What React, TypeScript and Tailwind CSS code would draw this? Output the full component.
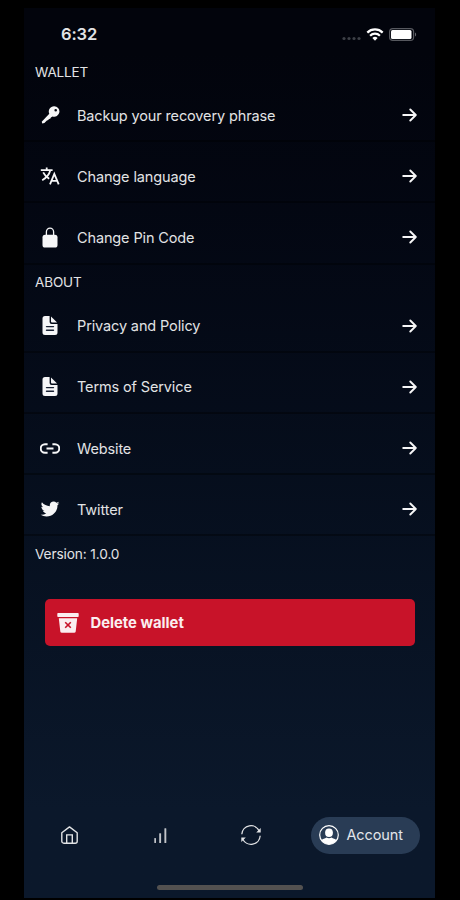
import type { ReactNode } from "react";
import { IoLogoTwitter } from "react-icons/io5";

type Item = { label: string; icon: ReactNode };

const walletItems: Item[] = [
  { label: "Backup your recovery phrase", icon: <KeyIcon /> },
  { label: "Change language", icon: <TranslateIcon /> },
  { label: "Change Pin Code", icon: <LockIcon /> },
];

const aboutItems: Item[] = [
  { label: "Privacy and Policy", icon: <DocumentIcon /> },
  { label: "Terms of Service", icon: <DocumentIcon /> },
  { label: "Website", icon: <LinkIcon /> },
  { label: "Twitter", icon: <IoLogoTwitter className="size-5" /> },
];

function KeyIcon() {
  return (
    <svg className="h-[18px] w-[19px]" viewBox="0 0 19 18" fill="none">
      <path
        d="M13 .3a5.2 5.2 0 1 1-1.500 10.100L9.900 11.400l-.7 1.300-1.300.2-.6 1.200-1.400.3-2.500 2.500-2.100.5-.6-1.700L8.300 7.800A5.200 5.200 0 0 1 13 .3Zm1.700 2.700a1.300 1.300 0 1 0 0 2.600 1.300 1.300 0 0 0 0-2.600Z"
        fill="currentColor"
        fillRule="evenodd"
      />
    </svg>
  );
}

function TranslateIcon() {
  return (
    <svg className="h-[18px] w-5" viewBox="0 0 20 18" fill="none" stroke="currentColor" strokeWidth="1.8">
      <path d="M.8 3.200h11.800M6.700.6v2.600M10.300 3.200C9.400 7 6.400 10.800 2.200 13.200M3.200 5.400c1.500 3 3.500 5 6 6.400" />
      <path d="m10 17.300 4.300-10.500 4.400 10.500M11.600 13.800h5.400" />
    </svg>
  );
}

function LockIcon() {
  return (
    <svg className="h-[21px] w-4" viewBox="0 0 16 21" fill="none">
      <path d="M4.400 8.500V4.700a3.600 3.600 0 0 1 7.200 0v3.800" stroke="currentColor" strokeWidth="1.300" />
      <rect x="0.500" y="7.700" width="15" height="12.800" rx="2.600" fill="currentColor" />
    </svg>
  );
}

function DocumentIcon() {
  return (
    <svg className="h-[19px] w-4" viewBox="0 0 16 19" fill="none">
      <path
        d="M3 0h4.600v5.900a2 2 0 0 0 2 2h5.900v8.500a2.500 2.500 0 0 1-2.500 2.500H3A2.500 2.500 0 0 1 .5 16.400V2.500A2.500 2.500 0 0 1 3 0Z"
        fill="currentColor"
      />
      <path d="M9 .4 15.100 6.500H10a1 1 0 0 1-1-1Z" fill="currentColor" />
      <path d="M4.500 10.600h7M4.500 14.300h7" stroke="#182032" strokeWidth="1.400" strokeLinecap="round" />
    </svg>
  );
}

function LinkIcon() {
  return (
    <svg className="h-[11px] w-5" viewBox="0 0 20 11" fill="none" stroke="currentColor" strokeWidth="2">
      <path d="M7.600 1.200H5a4.300 4.300 0 0 0 0 8.600h2.600M12.400 1.200H15a4.300 4.300 0 0 1 0 8.600h-2.600M6.500 5.500h7" />
    </svg>
  );
}

function ArrowIcon() {
  return (
    <svg className="h-[14px] w-[15px]" viewBox="0 0 15 14" fill="none" stroke="currentColor" strokeWidth="1.900">
      <path d="M1.200 7h12.300M8.300 1.500 13.800 7l-5.500 5.500" strokeLinejoin="round" strokeLinecap="round" />
    </svg>
  );
}

function TrashIcon() {
  return (
    <svg className="h-5 w-[22px]" viewBox="0 0 22 20" fill="none">
      <rect x="0.300" y="0" width="21.400" height="4" rx="0.800" fill="currentColor" />
      <path d="M1.800 5.200h18.400l-1.500 13.200a1.600 1.600 0 0 1-1.600 1.400H4.900a1.600 1.600 0 0 1-1.600-1.400Z" fill="currentColor" />
      <path d="m8.200 9.200 5.600 5.600M13.800 9.200l-5.600 5.600" stroke="#c81329" strokeWidth="1.600" />
    </svg>
  );
}

function HomeIcon() {
  return (
    <svg className="h-[18px] w-[17px]" viewBox="0 0 17 18" fill="none" stroke="currentColor" strokeWidth="1.400">
      <path d="M.8 6.700 8.500.9l7.700 5.800v8.500a2 2 0 0 1-2 2H2.800a2 2 0 0 1-2-2Z" strokeLinejoin="round" />
      <path d="M5.700 17V8.900h5.600V17" />
    </svg>
  );
}

function BarsIcon() {
  return (
    <svg className="h-[15px] w-[13px]" viewBox="0 0 13 15" fill="currentColor" opacity="0.850">
      <rect x="0.300" y="10" width="1.700" height="5" rx=".5" />
      <rect x="5.200" y="5.200" width="1.900" height="9.800" rx=".5" />
      <rect x="10.400" y="0.300" width="1.900" height="14.700" rx=".5" />
    </svg>
  );
}

function SyncIcon() {
  return (
    <svg className="size-5" viewBox="0 0 20 20" fill="none" stroke="currentColor" strokeWidth="1.300">
      <path d="M.8 9.200A9.200 9.200 0 0 1 18.300 6M19.200 10.800A9.200 9.200 0 0 1 1.700 14" />
      <path d="M19.700 3v4.400h-4.500ZM.3 17v-4.400h4.500Z" fill="currentColor" stroke="none" />
    </svg>
  );
}

function AccountIcon() {
  return (
    <svg className="size-5" viewBox="0 0 20 20" fill="none">
      <circle cx="10" cy="10" r="9.300" stroke="currentColor" strokeWidth="1.200" />
      <ellipse cx="10" cy="7.700" rx="3.900" ry="4.300" fill="currentColor" />
      <path d="M2.600 15.300c1-1.700 3.300-1.900 4.900-2.900 1.500 1.100 3.500 1.100 5 0 1.600 1 3.900 1.200 4.900 2.900A9.300 9.300 0 0 1 10 19.300a9.300 9.300 0 0 1-7.400-4Z" fill="currentColor" />
    </svg>
  );
}

function StatusBar() {
  return (
    <div className="flex h-[52px] items-center justify-between pr-[18.5px] pl-[37px]">
      <span className="text-[16.5px] leading-5 font-semibold">6:32</span>
      <div className="flex items-center text-white">
        <svg className="mt-1 h-3 w-[19px]" viewBox="0 0 19 12" fill="#3d4047">
          <circle cx="2" cy="8.500" r="1.600" />
          <circle cx="7" cy="8.500" r="1.600" />
          <circle cx="12" cy="8.500" r="1.600" />
          <circle cx="17" cy="8.500" r="1.600" />
        </svg>
        <svg className="ml-[5px] h-[13px] w-[18px]" viewBox="0 0 18 13" fill="none" stroke="currentColor" strokeWidth="2.200">
          <path d="M1.300 4.600a11 11 0 0 1 15.400 0M4.100 7.700a7 7 0 0 1 9.800 0" />
          <path d="m9 12.700-2.600-2.600a3.700 3.700 0 0 1 5.200 0Z" fill="currentColor" stroke="none" />
        </svg>
        <svg className="ml-[5px] h-[13px] w-7" viewBox="0 0 28 13" fill="none">
          <rect x="0.600" y="0.600" width="24" height="11.800" rx="3.200" stroke="#56585e" strokeWidth="1.200" />
          <rect x="2" y="2" width="20.500" height="9" rx="1.500" fill="currentColor" />
          <path d="M26 4.500c1.500.6 1.500 3.400 0 4Z" fill="#66686e" />
        </svg>
      </div>
    </div>
  );
}

function SettingsRow({ label, icon }: Item) {
  return (
    <div className="flex h-[61.2px] items-center border-b-2 border-black/35 pt-[9px] pr-[18px] pl-[14px] text-[#f6f6f7]">
      <span className="flex w-6 justify-center">{icon}</span>
      <span className="ml-[15px] flex-1 pt-px text-[#e2e3e5]">{label}</span>
      <ArrowIcon />
    </div>
  );
}

export default function App() {
  return (
    <div className="h-[900px] w-[460px] overflow-hidden bg-black pt-2 pl-6 font-[Inter,sans-serif] text-[14.5px] tracking-[-0.13px] text-[#e2e3e5]">
      <div className="flex h-[890px] w-[411px] flex-col bg-linear-to-b from-[#02040c] from-5% to-[#0b182b] to-90%">
        <StatusBar />
        <h2 className="h-[21px] pl-[11px] text-[13.5px] leading-6">WALLET</h2>
        {walletItems.map((item) => (
          <SettingsRow key={item.label} {...item} />
        ))}
        <h2 className="h-[27px] pl-[11px] text-[13.5px] leading-[35px]">ABOUT</h2>
        {aboutItems.map((item) => (
          <SettingsRow key={item.label} {...item} />
        ))}
        <p className="h-9 pl-[11px] text-[13.7px] leading-[37px]">Version: 1.0.0</p>

        <button className="mr-5 ml-[21px] mt-[27px] flex h-[47px] items-center rounded-[5px] bg-[#c81329] pl-[11.5px] text-[14.8px] font-bold tracking-normal text-[#fbeef0]">
          <TrashIcon />
          <span className="ml-3">Delete wallet</span>
        </button>

        <nav className="mt-auto mb-[24.5px] flex h-[51px] items-center pr-[15px] pl-[37px]">
          <HomeIcon />
          <span className="ml-[76px]">
            <BarsIcon />
          </span>
          <span className="ml-[74px]">
            <SyncIcon />
          </span>
          <div className="ml-auto flex h-[37px] w-[109.5px] items-center rounded-full bg-[#293c55] pl-2 text-white">
            <AccountIcon />
            <span className="ml-2 text-[14.5px] text-[#e2e5ea]">Account</span>
          </div>
        </nav>
        <div className="mb-[8px] ml-[132.5px] h-[5px] w-[146px] shrink-0 rounded-full bg-[#535150]" />
      </div>
    </div>
  );
}
